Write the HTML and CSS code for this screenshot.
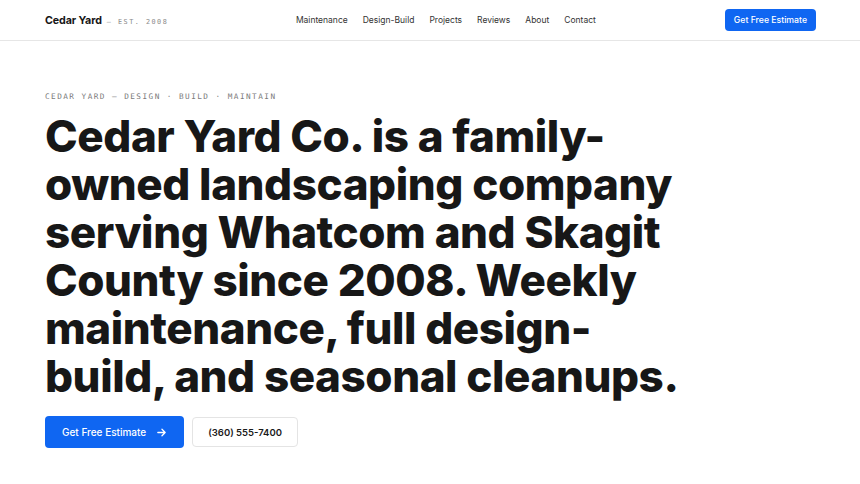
FILE: index.html
```html
<!DOCTYPE html>
<html lang="en">
<head>
    <meta charset="UTF-8">
    <meta name="viewport" content="width=device-width, initial-scale=1.0">
    <title>Cedar Yard Co. — Landscaping in Whatcom &amp; Skagit County</title>
    <link rel="stylesheet" href="styles.css">
</head>
<body>
    <header class="topbar">
        <div class="brand">
            <span class="brand-name">Cedar Yard</span>
            <span class="brand-est">– EST. 2008</span>
        </div>
        <nav class="nav">
            <a href="#">Maintenance</a>
            <a href="#">Design-Build</a>
            <a href="#">Projects</a>
            <a href="#">Reviews</a>
            <a href="#">About</a>
            <a href="#">Contact</a>
        </nav>
        <a class="btn btn-small" href="#">Get Free Estimate</a>
    </header>

    <main class="hero">
        <p class="eyebrow">CEDAR YARD — DESIGN · BUILD · MAINTAIN</p>
        <h1>Cedar Yard Co. is a family-owned landscaping company serving Whatcom and Skagit County since 2008. Weekly maintenance, full design-build, and seasonal cleanups.</h1>
        <div class="actions">
            <a class="btn btn-primary" href="#">
                Get Free Estimate
                <svg width="11" height="11" viewBox="0 0 12 12" fill="none" stroke="currentColor" stroke-width="1.4" stroke-linecap="round" stroke-linejoin="round"><path d="M2 6h8M6.5 2.5 10 6l-3.5 3.5"/></svg>
            </a>
            <a class="btn btn-outline" href="tel:3605557400">(360) 555-7400</a>
        </div>
    </main>
</body>
</html>
```

FILE: styles.css
```css
* {
    margin: 0;
    padding: 0;
    box-sizing: border-box;
}

body {
    font-family: Inter, "Liberation Sans", sans-serif;
    background: #fff;
    color: #161616;
}

a {
    color: inherit;
    text-decoration: none;
}

.topbar {
    height: 41px;
    display: flex;
    align-items: center;
    padding: 0 44px 0 45px;
    border-bottom: 1px solid #e6e6e6;
}

.brand {
    display: flex;
    align-items: baseline;
    gap: 5px;
    flex: 1;
}

.brand-name {
    font-size: 10.7px;
    font-weight: 700;
    letter-spacing: -0.01em;
}

.brand-est {
    font-family: "DejaVu Sans Mono", monospace;
    font-size: 6.8px;
    letter-spacing: 0.22em;
    color: #8a8a8a;
}

.nav {
    display: flex;
    gap: 15px;
    margin-right: 129px;
}

.nav a {
    font-size: 8.5px;
    color: #333;
}

.btn {
    display: inline-flex;
    align-items: center;
    justify-content: center;
    border-radius: 4px;
    font-weight: 500;
}

.btn-small {
    height: 22px;
    padding: 0 9px;
    background: #0f66f2;
    color: #fff;
    font-size: 8.7px;
}

.hero {
    padding: 51px 45px 0;
}

.eyebrow {
    font-family: "DejaVu Sans Mono", monospace;
    font-size: 7.7px;
    letter-spacing: 0.19em;
    color: #7a7a7a;
    margin-bottom: 11px;
}

.hero h1 {
    font-size: 44px;
    line-height: 48px;
    font-weight: 800;
    letter-spacing: -0.01em;
    max-width: 650px;
    color: #171717;
}

.actions {
    display: flex;
    align-items: center;
    gap: 8px;
    margin-top: 16px;
}

.btn-primary {
    height: 32px;
    padding: 0 17px;
    gap: 10px;
    background: #0f66f2;
    color: #fff;
    font-size: 10px;
}

.btn-outline {
    height: 30px;
    padding: 0 15px;
    border: 1px solid #e4e4e4;
    color: #1a1a1a;
    font-size: 9.5px;
    font-weight: 600;
}
```
